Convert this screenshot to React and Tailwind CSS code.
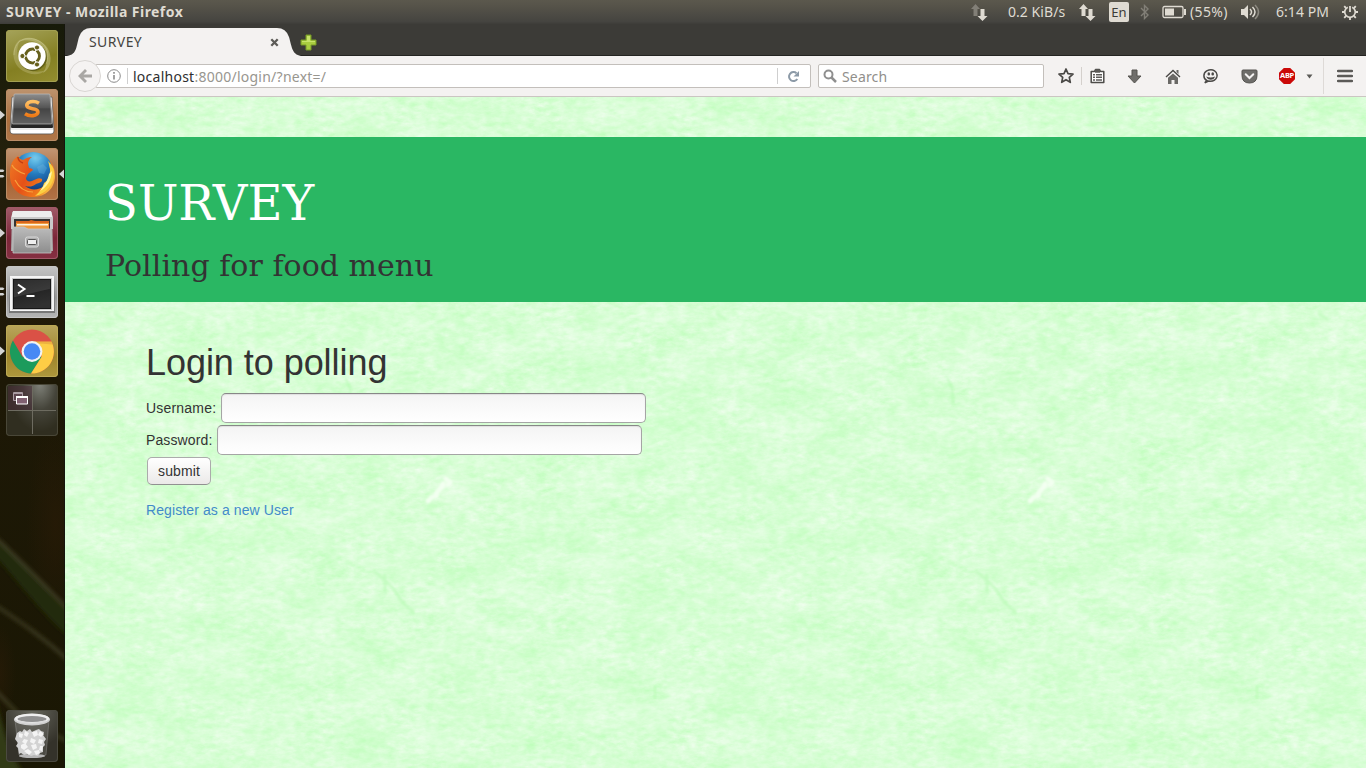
import React from "react";

const launcherTile =
  "relative flex h-[52px] w-[52px] shrink-0 items-center justify-center rounded-[4px]";

function Pip({ kind }) {
  if (kind === "double") {
    return (
      <svg className="absolute -left-[6px] top-[20px]" width="6" height="12" viewBox="0 0 6 12">
        <path d="M0 1.5h3l1.5 1.2L3 4H0zM0 7h3l1.5 1.2L3 9.500H0z" fill="#d4d4d4" />
      </svg>
    );
  }
  return (
    <svg className="absolute -left-[6px] top-[20px]" width="6" height="12" viewBox="0 0 6 12">
      <path d="M0 1.5 5 6 0 10.5z" fill="#d4d4d4" />
    </svg>
  );
}

function UbuntuLogo() {
  return (
    <svg width="52" height="52" viewBox="0 0 52 52" fill="none">
      <path d="M12 12C20 4 38 8 43 21c4 10 0 19-6 22 4-6 5-14 2-21C34 11 22 8 12 12z" fill="#f0efc8" fillOpacity=".3" />
      <path d="M40 40C32 48 14 44 9 32 5 22 9 12 15 9c-4 6-5 14-2 21 5 11 17 14 27 10z" fill="#f0efc8" fillOpacity=".22" />
      <path d="M8 25C8 12 18 6 28 9c11 3 17 13 12 25" stroke="#dcdba4" strokeOpacity=".35" />
      <circle cx="27" cy="27.2" r="14" fill="#4d4c10" fillOpacity=".6" />
      <circle cx="26" cy="26" r="13.7" fill="#fff" />
      <circle cx="26.500" cy="26" r="6.900" stroke="#66601d" strokeWidth="3" />
      <path d="M26.500 26h-11M26.500 26l6 10M26.500 26l6-10" stroke="#fff" strokeWidth="1.200" />
      <circle cx="26.500" cy="26" r="5.300" fill="#fff" />
      <g fill="#66601d" stroke="#fff" strokeWidth="1">
        <circle cx="16.400" cy="26" r="2.600" />
        <circle cx="31" cy="17.500" r="2.600" />
        <circle cx="31" cy="34.500" r="2.600" />
      </g>
    </svg>
  );
}

function SublimeLogo() {
  return (
    <svg width="52" height="52" viewBox="0 0 52 52">
      <defs>
        <linearGradient id="subTop" x1="0" y1="0" x2="0" y2="1">
          <stop offset="0" stopColor="#8d8d8d" />
          <stop offset=".45" stopColor="#565656" />
          <stop offset=".5" stopColor="#454545" />
          <stop offset="1" stopColor="#636363" />
        </linearGradient>
        <linearGradient id="subS" x1="0" y1="0" x2="0" y2="1">
          <stop offset="0" stopColor="#ffc064" />
          <stop offset="1" stopColor="#ee7a16" />
        </linearGradient>
      </defs>
      <path d="M6 8h40l2 34q0 3-3 3H7q-3 0-3-3z" fill="#e9e9e9" stroke="#555" strokeWidth=".7" />
      <path d="M5 41h42v2q-1 1-2 1H7q-2 0-2-1z" fill="#fff" />
      <path d="M8 6h36l3 32q0 1-1 1H6q-1 0-1-1z" fill="#262626" />
      <path d="M9 5h34q1 0 1 1l2 28q0 1-1 1H7q-1 0-1-1L8 6q0-1 1-1z" fill="url(#subTop)" stroke="#bdbdbd" strokeWidth=".7" />
      <path d="M33 14.200c-2.500-1.500-5.500-2-8.500-1.400-3.500.8-4.700 3.600-2.700 5.400 2.400 2.100 8.700.9 9.900 3.900.9 2.500-1.700 4.200-4.700 4.500-2.900.3-5.700-.3-8-1.800" fill="none" stroke="url(#subS)" strokeWidth="3.600" />
    </svg>
  );
}

function FirefoxLogo() {
  return (
    <svg width="52" height="52" viewBox="0 0 52 52">
      <defs>
        <radialGradient id="ffGlobe" cx=".55" cy=".15" r=".9">
          <stop offset="0" stopColor="#72cdf0" />
          <stop offset=".45" stopColor="#2379bd" />
          <stop offset="1" stopColor="#122f6d" />
        </radialGradient>
        <linearGradient id="ffFox" x1="0" y1="0" x2="1" y2=".5">
          <stop offset="0" stopColor="#ef7b24" />
          <stop offset=".5" stopColor="#e55118" />
          <stop offset=".85" stopColor="#f07a1c" />
          <stop offset="1" stopColor="#f8b13e" />
        </linearGradient>
      </defs>
      <circle cx="27" cy="24" r="20" fill="url(#ffGlobe)" />
      <path d="M25 8c4-2 9 0 11 2l-4 3-5-1zM31 19l6-3 4 4-3 6-5-1z" fill="#79bde0" opacity=".3" />
      <path d="M5 17c1-4 4-7 7-9 1 3 3 3 5 4 3-2 6-3 9-3-3 2-4 4-4 7l1 4c2 0 4 1 4 2l-5 4-2 4c0 3 3 4 6 3 4-2 7-4 10-2 1 3-3 4-6 5-4 3-7 3-11 2 6 5 14 4 19 0 6-5 6-10 6-14l3 3c0-6-1-11-4-15 4 4 6 9 6 16 0 12-9 21-22 21C13 49 4 40 4 28c0-4 0-8 1-11z" fill="url(#ffFox)" />
      <path d="M48 24c1 12-8 22-19 24 5-4 8-9 9-13 5-3 6-8 6-14-1-3-1-6-2-8 4 4 6 7 6 11z" fill="#fbcf42" />
      <path d="M46 23c-1 10-5 16-12 20 4-5 8-11 9-17z" fill="#fff6a6" />
      <path d="M6 17c2 5 7 7 13 9M9 32c4 8 10 12 18 12" fill="none" stroke="#f7a13c" strokeWidth="1.200" />
      <path d="M12 9c0 4 2 5 5 6" fill="none" stroke="#c63d12" strokeWidth="1.500" />
    </svg>
  );
}

function FilesLogo() {
  return (
    <svg width="52" height="52" viewBox="0 0 52 52">
      <defs>
        <linearGradient id="cab" x1="0" y1="0" x2="0" y2="1">
          <stop offset="0" stopColor="#bcbcbc" />
          <stop offset="1" stopColor="#8d8d8d" />
        </linearGradient>
      </defs>
      <path d="M6 5h40l1 39H5z" fill="#a9a9a9" />
      <path d="M7 4h38l2 7H5z" fill="#ededed" />
      <path d="M5 10h42v12H5z" fill="#c9c9c9" />
      <path d="M8 12h36v11H8z" fill="#343434" />
      <path d="M10 14h13l2-1 4 1h14v8H10z" fill="#d9651d" />
      <path d="M10 16h33v7H10z" fill="#ef9b3f" />
      <path d="M11 17h31v1.500H11z" fill="#fff5e4" />
      <path d="M7 20h11l4 2h23v24H7z" fill="url(#cab)" stroke="#c5c5c5" strokeWidth=".8" />
      <rect x="19.500" y="30" width="13" height="10" rx="2" fill="#b1b1b1" stroke="#d8d8d8" />
      <rect x="21.500" y="32.500" width="9" height="5" rx="1" fill="#eee" stroke="#555" />
    </svg>
  );
}

function TerminalLogo() {
  return (
    <svg width="52" height="52" viewBox="0 0 52 52">
      <defs>
        <linearGradient id="term" x1="0" y1="0" x2="0.300" y2="1">
          <stop offset="0" stopColor="#2c2c2c" />
          <stop offset=".55" stopColor="#3a3a3a" />
          <stop offset=".58" stopColor="#262626" />
          <stop offset="1" stopColor="#303030" />
        </linearGradient>
      </defs>
      <path d="M4 10h44l1 37H3z" fill="#777" />
      <rect x="4" y="10" width="44" height="35" fill="#f5f5f5" />
      <rect x="6" y="12" width="40" height="32" fill="#c8c8c8" />
      <rect x="7.500" y="13.500" width="37" height="29" fill="url(#term)" stroke="#171717" />
      <path d="m12 18.500 6.500 4.500-6.500 4.500M20.500 30h8" stroke="#fff" strokeWidth="2" fill="none" />
    </svg>
  );
}

function ChromeLogo() {
  return (
    <svg width="52" height="52" viewBox="0 0 52 52">
      <circle cx="26" cy="26.500" r="22" fill="#da5146" />
      <path d="M6.900 15.500A22 22 0 0 0 25 48.500L35.500 32 26 26.500 16.500 32z" fill="#1c9b5c" />
      <path d="M45.500 16.500A22 22 0 0 1 25 48.500L35.500 32 35.500 26 26 16.500z" fill="#fdcd45" />
      <path d="M26 16.500h19.500l1 3L28 18z" fill="#a63e2d" opacity=".18" />
      <circle cx="26" cy="26.500" r="10.400" fill="#f3f3f3" />
      <circle cx="26" cy="26.500" r="8.300" fill="#4789f4" />
    </svg>
  );
}

function WorkspaceLogo() {
  return (
    <svg width="52" height="52" viewBox="0 0 52 52" fill="none">
      <path d="M2 2h24v24H2z" fill="#4a2c3a" fillOpacity=".5" />
      <path d="M26.500 2v48M2 26.500h48" stroke="#6d6b60" />
      <path d="M7.500 8.500h9v8h-9z" stroke="#a99ba2" fill="#5c454f" />
      <path d="M7 9.500h10" stroke="#a99ba2" />
      <path d="M10.500 13h11v7h-11z" stroke="#fff" fill="#806071" />
      <path d="M10 13h12" stroke="#fff" strokeWidth="2" />
    </svg>
  );
}

function TrashLogo() {
  return (
    <svg width="52" height="52" viewBox="0 0 52 52">
      <path d="M9 10h34l-3 35q-14 5-27 0z" fill="#aaa" fillOpacity=".2" stroke="#aaa" strokeOpacity=".35" />
      <ellipse cx="26" cy="46" rx="13" ry="2" fill="#b6b6b6" />
      <path d="m11 23 3-2 2 1 2-3 3 2 3-2 2 3 4-2 3-1 2 2 3 1-1 3 3 4-2 3 1 3-2 2v5l-3 1-2 3-4-1-3 1-3-2-4 1-3-2-2 1-1-6-2-2 2-3-3-4z" fill="#d2d2d2" />
      <path d="m13 23 4 1-1 4-3-1zm6-2 4 2-2 4-3-2zm7 1 5-1 1 4-4 2zm8-1 4 3-3 3-3-2zm-16 8 4 1-2 4-4-2zm7-1 5 2-2 4-4-2zm8 1 4 1-1 4-4-1zM15 35l4-2 3 4-4 3-3-2zm10 0 5-1 1 4-4 2zm9 1 3 0-1 5-3-1zM18 41l4-2 4 3-3 3zm10 0 5-1 1 3-4 2z" fill="#f4f4f4" />
      <ellipse cx="26" cy="9.500" rx="18" ry="6" fill="#cfcfcf" />
      <ellipse cx="26" cy="8.500" rx="17" ry="4.800" fill="#eee" />
      <ellipse cx="26" cy="9" rx="14.500" ry="3" fill="#909090" />
      <path d="M12 10q14 5 28 0v2q-14 4-28 0z" fill="#dadada" />
    </svg>
  );
}

function Launcher() {
  return (
    <aside className="relative flex w-[65px] shrink-0 flex-col gap-[7px] border-r border-[#15150d] bg-[linear-gradient(180deg,#171a09_0px,#24200c_130px,#241b0b_240px,#1d1806_350px,#1a1704_744px)] pb-1.5 pl-1.5 pt-1.5">
      <svg className="absolute left-0 top-0" width="64" height="744" viewBox="0 0 64 744" fill="none">
        <defs>
          <filter id="leaf"><feGaussianBlur stdDeviation="2.200" /></filter>
          <radialGradient id="brown">
            <stop offset="0" stopColor="#2e1c08" stopOpacity=".5" />
            <stop offset="1" stopColor="#2e1c08" stopOpacity="0" />
          </radialGradient>
        </defs>
        <ellipse cx="56" cy="500" rx="30" ry="100" fill="url(#brown)" />
        <ellipse cx="0" cy="650" rx="16" ry="50" fill="url(#brown)" />
        <g filter="url(#leaf)">
          <path d="M-5 473C25 498 45 525 70 550v28C42 550 20 520-5 496z" fill="#232a07" opacity=".0" />
          <path d="M-5 470C25 498 45 519 70 544v24C42 540 20 515-5 490z" fill="#232a07" opacity=".0" />
          <path d="M-5 468C25 496 45 517 70 542" stroke="#47452a" strokeWidth="2.500" opacity="0" />
          <path d="M-5 513C25 538 45 565 70 590v24C42 590 20 560-5 532z" fill="#232a07" />
          <path d="M-5 513C25 541 45 562 70 587M-5 581c30 20 50 34 73 55M-5 666c10 10 20 20 28 30s30 12 46 22" stroke="#47452a" strokeWidth="2.500" />
          <path d="M-5 674C5 710 10 730 23 748H-5z" fill="#303a13" />
        </g>
      </svg>
      <div className={launcherTile + " bg-[linear-gradient(160deg,#a5a35a,#847f22_60%,#948e30)] shadow-[inset_0_0_0_1px_#a3a052]"}><UbuntuLogo /></div>
      <div className={launcherTile + " bg-[linear-gradient(180deg,#bd936e,#ab6f3d_60%,#b07749)] shadow-[inset_0_0_0_1px_#bb8d66]"}><Pip /><SublimeLogo /></div>
      <div className={launcherTile + " bg-[linear-gradient(180deg,#c29674,#a76435_60%,#b17347)] shadow-[inset_0_0_0_1px_#bb8d66]"}>
        <Pip kind="double" />
        <FirefoxLogo />
        <svg className="absolute -right-[6px] top-[20px]" width="6" height="12" viewBox="0 0 6 12"><path d="M6 1.500 1 6l5 4.500z" fill="#d4d4d4" /></svg>
      </div>
      <div className={launcherTile + " bg-[linear-gradient(180deg,#a15b68,#7c2638_60%,#853042)] shadow-[inset_0_0_0_1px_#a05868]"}><Pip /><FilesLogo /></div>
      <div className={launcherTile + " bg-[linear-gradient(180deg,#c5c5c5,#999_60%,#b5b5b5)] shadow-[inset_0_0_0_1px_#c5c5c5]"}><Pip kind="double" /><TerminalLogo /></div>
      <div className={launcherTile + " bg-[linear-gradient(180deg,#b9a55c,#9f852c_60%,#ae983d)] shadow-[inset_0_0_0_1px_#bca955]"}><Pip /><ChromeLogo /></div>
      <div className={launcherTile + " bg-[radial-gradient(ellipse_at_65%_0%,#80827a_0%,#45443a_35%,#302e20_65%)] shadow-[inset_0_0_0_1px_#494738]"}><WorkspaceLogo /></div>
      <div className={launcherTile + " mt-auto bg-[radial-gradient(circle_at_50%_0%,#67675d_0%,#34322a_65%)] shadow-[inset_0_0_0_1px_#4b4a40]"}><TrashLogo /></div>
    </aside>
  );
}

function Arrows({ upColor }) {
  return (
    <svg width="18" height="18" viewBox="0 0 18 18">
      <path d="M5.500 1 10 6H7.500v7h-4V6H1z" fill={upColor} />
      <path d="M10.500 6h4v7H17.500l-5 5-5-5h3z" fill="#dfdbd2" />
    </svg>
  );
}

function SystemBar() {
  return (
    <header className="flex h-6 shrink-0 items-center bg-[linear-gradient(180deg,#5b584d_0%,#57544a_20%,#454440_90%,#3d3c38_100%)] pl-1.5 text-[14px] text-[#dfdbd2]">
      <h1 className="w-[300px] whitespace-nowrap text-[14px] font-bold tracking-[0.450px]">SURVEY - Mozilla Firefox</h1>
      <div className="ml-auto flex h-6 items-center">
        <div className="w-[38px]"><Arrows upColor="#827f77" /></div>
        <span className="w-[70px] whitespace-nowrap tracking-[0.050px]">0.2 KiB/s</span>
        <div className="w-[31px]"><Arrows upColor="#dfdbd2" /></div>
        <span className="flex h-[20px] w-[20px] items-center justify-center rounded-[2px] bg-[#dfdbd2] text-[13px] text-[#3c3b37]">En</span>
        <svg className="ml-[11px]" width="10" height="16" viewBox="0 0 10 16" fill="none" stroke="#827f77" strokeWidth="1.400"><path d="m1 4 7 7-3.500 3.500v-13L8 5l-7 7" /></svg>
        <svg className="ml-[12px]" width="25" height="14" viewBox="0 0 25 14"><rect x="1" y="1.500" width="20" height="11" rx="1.500" fill="none" stroke="#dfdbd2" strokeWidth="1.300" /><path d="M3 3.500h9v7H3zM22 4h2v6h-2z" fill="#dfdbd2" /></svg>
        <span className="ml-[3px] w-[50px] whitespace-nowrap tracking-[0.350px]">(55%)</span>
        <svg width="21" height="16" viewBox="0 0 21 16" fill="none" strokeWidth="1.500"><path d="M1 5h3l4-4v14l-4-4H1z" fill="#dfdbd2" /><path d="M10 5q3 3 0 6M12.500 3q5 5 0 10" stroke="#dfdbd2" /><path d="M15 1q7 7 0 14" stroke="#8b887f" /></svg>
        <span className="ml-[15px] w-[65px] whitespace-nowrap tracking-[0.050px]">6:14 PM</span>
        <svg className="mr-[7px]" width="18" height="18" viewBox="0 0 18 18" fill="none" stroke="#dfdbd2">
          <path d="M6.800 4.200a5.300 5.300 0 1 0 4.400 0" strokeWidth="1.700" /><path d="M9 3v6" strokeWidth="1.800" />
          <path d="M3.500 9H1M17 9h-2.500M9 14.500V17M5 5 3.200 3.200M13 5l1.800-1.800M5 13l-1.800 1.800M13 13l1.800 1.800" strokeWidth="1.800" />
        </svg>
      </div>
    </header>
  );
}

function TabStrip() {
  return (
    <div className="flex h-8 shrink-0 bg-[#3c3b37] shadow-[inset_0_-1px_0_#242421]">
      <div className="relative h-8 w-[235px]">
        <svg className="absolute inset-0" width="238" height="32" viewBox="0 0 238 32"><path d="M0 32C12 32 11 23 14 13Q17 4 26 4H212Q221 4 224 13C227 23 227 32 238 32z" fill="#f4f2f1" /></svg>
        <div className="relative flex h-8 items-center pl-6 pt-1 text-[14px] text-[#46443f]">
          <span className="w-[181px] tracking-[0.400px]">SURVEY</span>
          <svg width="9" height="9" viewBox="0 0 9 9"><path d="m1.300 1.300 6.400 6.400m0-6.400L1.300 7.700" stroke="#5c5b57" strokeWidth="2.300" /></svg>
        </div>
      </div>
      <svg className="mt-[10px]" width="17" height="17" viewBox="0 0 17 17"><path d="M6 1h5v5h5v5h-5v5H6v-5H1V6h5z" fill="#a9cd40" stroke="#769a27" /><path d="M7 2h3v5h5v1H2V7h5z" fill="#c7e36a" /></svg>
    </div>
  );
}

function Cell({ className, children }) {
  return <div className={"flex h-full shrink-0 items-center justify-center " + className}>{children}</div>;
}

function NavBar() {
  return (
    <nav className="flex h-[41px] shrink-0 items-center border-b border-[#cbc6c2] bg-[#f4f2f1] text-[14px]">
      <div className="relative z-10 ml-1 flex h-8 w-8 shrink-0 items-center justify-center rounded-full border border-[#d9d6d3] bg-[#f5f3f2]">
        <svg width="16" height="16" viewBox="0 0 16 16"><path d="m1 8 7-7 2 2-3.500 3.500H15v3H6.500L10 13l-2 2z" fill="#a9a7a4" /></svg>
      </div>
      <div className="-ml-1.5 flex h-6 w-[716px] shrink-0 items-center rounded-[2px] border border-[#c3bfbb] bg-white">
        <svg className="ml-[11px]" width="14" height="14" viewBox="0 0 14 14" fill="none" stroke="#8b8b8b"><circle cx="7" cy="7" r="6.300" /><path d="M7 6v4.500M7 3v1.700" strokeWidth="1.600" /></svg>
        <span className="ml-[6px] h-[16px] w-px bg-[#cfcfcf]" />
        <span className="ml-[5px] mt-px whitespace-nowrap tracking-[0.250px] text-[#98968f]"><span className="text-[#2e2e2e]">localhost</span>:8000/login/?next=/</span>
        <span className="ml-auto h-[16px] w-px bg-[#cfcfcf]" />
        <svg className="ml-[9px] mr-[10px]" width="13" height="13" viewBox="0 0 13 13"><path d="M10.300 9A4.500 4.500 0 1 1 9.500 3.200" fill="none" stroke="#8c9aa7" strokeWidth="2" /><path d="M12 1v5.500H6.500z" fill="#8c9aa7" /></svg>
      </div>
      <div className="ml-[7px] flex h-6 w-[226px] shrink-0 items-center rounded-[2px] border border-[#c3bfbb] bg-white text-[#918f8b]">
        <svg className="ml-[4px]" width="14" height="14" viewBox="0 0 14 14" fill="none" stroke="#8f8f8f"><circle cx="5.500" cy="5.500" r="4" strokeWidth="2" /><path d="m8.500 8.500 4.500 4.500" strokeWidth="2.500" /></svg>
        <span className="ml-[5px] mt-[2px] tracking-[0.150px]">Search</span>
      </div>
      <Cell className="ml-[7px] w-[30px]">
        <svg width="16" height="16" viewBox="0 0 16 16" fill="none" stroke="#4a4946" strokeWidth="1.700" strokeLinejoin="round"><path d="m8 1 2 4.600 5 .5-3.700 3.300 1 4.900L8 11.700l-4.300 2.600 1-4.900L1 6.100l5-.5z" /></svg>
      </Cell>
      <span className="h-[18px] w-px bg-[#d4d0cc]" />
      <Cell className="w-[30px]">
        <svg width="15" height="16" viewBox="0 0 15 16"><path d="M1.200 3.500h3.300l1-2h4l1 2h3.300v10.900H1.200z" fill="#fff" stroke="#4d4c49" strokeWidth="1.500" strokeLinejoin="round" /><path d="M5 1.500h5v3.300H5zM3 6h2v1.500H3zm3 0h6v1.500H6zM3 8.600h2v1.500H3zm3 0h6v1.500H6zm-3 2.600h2v1.500H3zm3 0h6v1.500H6z" fill="#5c5b58" /></svg>
      </Cell>
      <Cell className="w-[44px]"><svg width="15" height="15" viewBox="0 0 15 15"><path d="M5 1h5v6h4l-6.500 7L1 7h4z" fill="#6f6e6b" stroke="#54534f" strokeLinejoin="round" /></svg></Cell>
      <Cell className="w-[34px]"><svg width="16" height="15" viewBox="0 0 16 15"><path d="m1 8 7-6.500L15 8" fill="none" stroke="#4a4946" strokeWidth="1.400" /><path d="M11.500 1h2v4l-2-2zM3 8.700 8 4.500l5 4.200V15H9.500v-4h-3v4H3z" fill="#6a6966" /></svg></Cell>
      <Cell className="w-[40px]"><svg width="15" height="15" viewBox="0 0 15 15"><path d="M3.800 11.500C-.2 9.500.1 3.800 3.700 1.900c6-3 11.600.8 10.100 6-1.300 4-5.500 4.500-8.200 4.200L1.800 13.800l2-2.300z" fill="none" stroke="#4a4946" strokeWidth="1.500" /><ellipse cx="5.800" cy="4.900" rx="1.300" ry="1.700" fill="#4a4946" /><ellipse cx="9.700" cy="4.900" rx="1.300" ry="1.700" fill="#4a4946" /><path d="M3 7.500q4.700 2 9 0-1 3.300-4.400 3.300Q4.200 10.300 3 7.500z" fill="#4a4946" /></svg></Cell>
      <Cell className="w-[38px]"><svg width="17" height="15" viewBox="0 0 17 15"><path d="M1 2q0-1 1-1h13q1 0 1 1v4.500Q16 14 8.500 14T1 6.500z" fill="#6e6d6a" stroke="#54534f" /><path d="m4.700 5.200 3.800 3.800 3.800-3.800" fill="none" stroke="#f4f2f1" strokeWidth="2" strokeLinecap="round" /></svg></Cell>
      <Cell className="w-[38px]">
        <div className="flex h-[16px] w-[16px] items-center justify-center bg-[#cb0908] font-['Noto_Sans',sans-serif] text-[7.500px] font-bold leading-none tracking-[-0.350px] text-white [clip-path:polygon(30%_0,70%_0,100%_30%,100%_70%,70%_100%,30%_100%,0_70%,0_30%)]">ABP</div>
      </Cell>
      <Cell className="w-[7px]"><svg width="7" height="5" viewBox="0 0 7 5"><path d="M.500.500h6l-3 4z" fill="#5b5a57" /></svg></Cell>
      <span className="ml-[10px] h-[36px] w-px bg-[#dedad7]" />
      <Cell className="w-[42px]"><svg width="16" height="14" viewBox="0 0 16 14"><path d="M1 2h14M1 7h14M1 12h14" stroke="#5b5a57" strokeWidth="2.500" strokeLinecap="round" /></svg></Cell>
    </nav>
  );
}

function PaperTexture() {
  return (
    <svg className="absolute inset-0 h-full w-full" aria-hidden="true">
      <defs>
        <filter id="paper" x="0" y="0" width="100%" height="100%" colorInterpolationFilters="sRGB">
          <feTurbulence type="fractalNoise" baseFrequency="0.022 0.035" numOctaves="3" seed="11" stitchTiles="stitch" result="cloud" />
          <feTurbulence type="fractalNoise" baseFrequency="0.100 0.200" numOctaves="4" seed="4" stitchTiles="stitch" result="grain" />
          <feComposite in="cloud" in2="grain" operator="arithmetic" k1="0" k2=".45" k3=".55" k4="0" />
          <feColorMatrix values=".270 0 0 0 .710  0 0 0 0 .998  .280 0 0 0 .695  0 0 0 0 1" />
        </filter>
        <filter id="fiber" x="-20%" y="-20%" width="140%" height="140%">
          <feGaussianBlur stdDeviation="1.100" />
        </filter>
        <pattern id="sheet" width="602" height="602" patternUnits="userSpaceOnUse">
          <rect width="602" height="602" filter="url(#paper)" />
          <g filter="url(#fiber)" fill="none" strokeLinecap="round">
            <path d="M363 404l4-4 4-1 1-4 5-5 1-3M381 382l4 3-1 2" stroke="#f5fff3" strokeWidth="5" opacity=".9" />
            <path d="M310 475q16 12 22 22t16 18M320 478v18" stroke="#b4fab0" strokeWidth="3" opacity=".55" />
            <path d="M281 282q6 10 5 24M340 276h12M590 590v14M50 217l8 5" stroke="#b4fab0" strokeWidth="2.500" opacity=".6" />
            <path d="M190 257l5 2 4-1M205 254l7 4M192 304h6M290 252l8 4M450 545l6-4M314 382l3 2" stroke="#f4fff2" strokeWidth="3" opacity=".6" />
          </g>
        </pattern>
      </defs>
      <rect width="100%" height="100%" fill="url(#sheet)" />
    </svg>
  );
}

const field =
  "h-[30px] w-[425px] rounded-[5px] border border-[#a5a5a5] border-t-[#878787] bg-[linear-gradient(180deg,#f4f4f4,#fff)] px-2 shadow-[inset_0_1px_1px_#dfdfdf] outline-none";

function LoginPage() {
  return (
    <main className="relative min-h-0 flex-1 overflow-hidden bg-[#d6fed3] pt-10 text-[14px] text-[#333]">
      <PaperTexture />
      <section className="relative h-[165px] bg-[#2ab763] pl-10 pt-10 font-['DejaVu_Serif',serif]">
        <h1 className="text-[48px] leading-[52px] text-white">SURVEY</h1>
        <p className="mt-[20px] text-[30px] leading-[34px] tracking-[0.040px]">Polling for food menu</p>
      </section>
      <section className="relative pl-[81px] pt-[41px] font-['Liberation_Sans',sans-serif]">
        <h2 className="text-[36px] leading-[40px] tracking-[-0.050px]">Login to polling</h2>
        <form className="mt-[10px] flex flex-col items-start gap-0.5" onSubmit={(e) => e.preventDefault()}>
          <label className="flex items-center gap-[5px]"><span className="w-[70px] whitespace-nowrap tracking-[0.200px]">Username:</span><input className={field} /></label>
          <label className="flex items-center gap-[5px]"><span className="w-[66px] whitespace-nowrap tracking-[0.120px]">Password:</span><input type="password" className={field} /></label>
          <button className="ml-px h-[28px] w-[64px] rounded-[5px] border border-[#ababab] border-b-[#919191] bg-[linear-gradient(180deg,#fff,#ebe9e8)] tracking-[0.100px]">submit</button>
        </form>
        <a className="mt-[15px] block leading-5 tracking-[0.100px] text-[#428bca]" href="#register">Register as a new User</a>
      </section>
    </main>
  );
}

export default function App() {
  return (
    <div className="flex h-[768px] w-[1366px] flex-col overflow-hidden font-['Noto_Sans',sans-serif] leading-5">
      <SystemBar />
      <div className="flex min-h-0 flex-1">
        <Launcher />
        <div className="flex min-w-0 flex-1 flex-col">
          <TabStrip />
          <NavBar />
          <LoginPage />
        </div>
      </div>
    </div>
  );
}
